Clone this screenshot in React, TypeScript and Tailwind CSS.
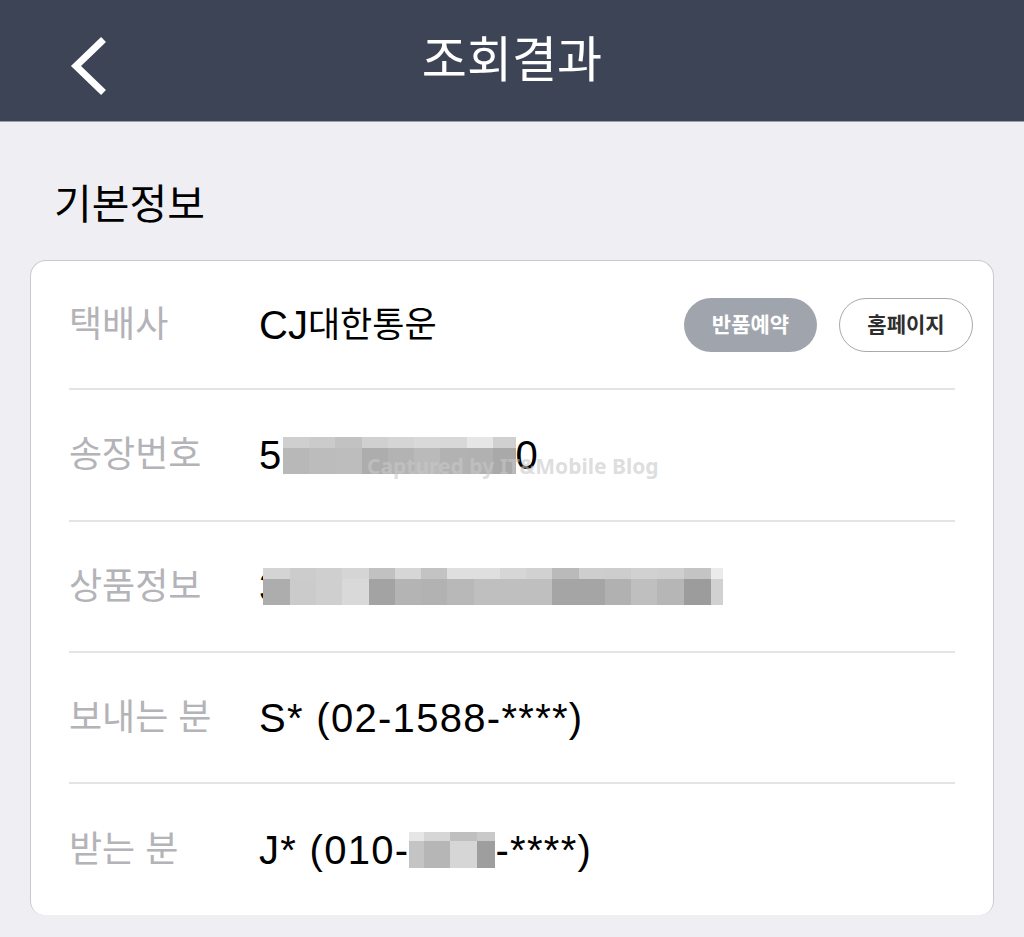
const font = { fontFamily: '"Liberation Sans", "Noto Sans CJK KR", sans-serif' }

type Block = { top: string[]; bottom: string[]; widths: number[] }

const serialBlock: Block = {
  widths: [26, 26, 27, 26, 26, 26, 27, 26, 23],
  top: ['#cfcfcf', '#cbcbcb', '#c2c2c2', '#d0d0d0', '#d5d5d5', '#d9d9d9', '#d8d8d8', '#e6e6e6', '#d0d0d0'],
  bottom: ['#b8b8b8', '#bcbcbc', '#bdbdbd', '#adadad', '#b3b3b3', '#bababa', '#b2b2b2', '#b1b1b1', '#a9a9a9'],
}

const productBlock: Block = {
  widths: [27, 26, 26, 27, 26, 26, 26, 27, 26, 26, 26, 27, 26, 26, 26, 27, 27, 12],
  top: ['#d4d4d4', '#cccccc', '#cfcfcf', '#d5d5d5', '#c1c1c1', '#d6d6d6', '#c3c3c3', '#dfdfdf', '#dfdfdf', '#d6d6d6', '#d1d1d1', '#bababa', '#cecece', '#cdcdcd', '#d1d1d1', '#cfcfcf', '#c4c4c4', '#ebebeb'],
  bottom: ['#adadad', '#cbcbcb', '#cfcfcf', '#d9d9d9', '#a3a3a3', '#b4b4b4', '#b2b2b2', '#b8b8b8', '#bfbfbf', '#bfbfbf', '#bfbfbf', '#a5a5a5', '#a5a5a5', '#b1b1b1', '#bfbfbf', '#b6b6b6', '#9c9c9c', '#d1d1d1'],
}

const phoneBlock: Block = {
  widths: [15, 26, 27, 18],
  top: ['#e6e6e6', '#d6d6d6', '#bfbfbf', '#c9c9c9'],
  bottom: ['#c4c4c4', '#b6b6b6', '#d6d6d6', '#9e9e9e'],
}

const Mosaic = ({ block, topH, bottomH }: { block: Block; topH: number; bottomH: number }) => (
  <span className="inline-flex flex-col self-center">
    <span className="flex">
      {block.widths.map((w, i) => (
        <span key={i} style={{ width: w, height: topH, background: block.top[i] }} />
      ))}
    </span>
    <span className="flex">
      {block.widths.map((w, i) => (
        <span key={i} style={{ width: w, height: bottomH, background: block.bottom[i] }} />
      ))}
    </span>
  </span>
)

const Row = ({ label, children, h }: { label: string; children: React.ReactNode; h: string }) => (
  <div className={`flex items-center px-[38px] ${h}`}>
    <div className="w-[190px] shrink-0 text-[36px] text-[#b3b3b8]">{label}</div>
    <div className="flex flex-1 items-center text-[40px] leading-none tracking-[1.3px] text-black">{children}</div>
  </div>
)

const Divider = () => <div className="mx-[38px] h-[2px] bg-[#e4e4e7]" />

export default function App() {
  return (
    <div className="min-h-[937px] w-[1024px] bg-[#efeef3]" style={font}>
      {/* header */}
      <div className="relative flex h-[122px] items-center justify-center border-b border-[#9a9ea8] bg-[#3d4456]">
        <button className="absolute left-[66px] top-[34px]" aria-label="back">
          <svg width="48" height="64" viewBox="0 0 48 64">
            <path d="M35 8 L10 32 L35 56" fill="none" stroke="white" strokeWidth="7" strokeLinecap="square" />
          </svg>
        </button>
        <h1 className="text-[49px] font-normal leading-none text-white">조회결과</h1>
      </div>

      {/* section title */}
      <div className="px-[54px] pt-[60px] text-[41px] leading-[46px] text-black">기본정보</div>

      {/* card */}
      <div className="mx-[30px] mt-[32px] h-[655px] rounded-t-[16px] rounded-b-[14px] border border-b-0 border-[#c9c9ce] bg-white">
        <div className="flex h-[127px] items-center pl-[38px] pr-[20px]">
          <div className="w-[190px] shrink-0 text-[36px] text-[#b3b3b8]">택배사</div>
          <div className="flex flex-1 items-center leading-none text-black">
            <span className="text-[40px]">CJ</span>
            <span className="text-[35px]">대한통운</span>
          </div>
          <div className="flex gap-[22px]">
            <button className="flex h-[54px] w-[133px] items-center justify-center rounded-full bg-[#a0a4ad] text-[21px] font-semibold text-white">
              반품예약
            </button>
            <button className="flex h-[54px] w-[134px] items-center justify-center rounded-full border border-[#a8a8ad] bg-white text-[21px] font-semibold text-[#2e2e2e]">
              홈페이지
            </button>
          </div>
        </div>
        <Divider />
        <Row label="송장번호" h="h-[130px] relative">
          <span>5</span>
          <Mosaic block={serialBlock} topH={11} bottomH={26} />
          <span>0</span>
          <span className="absolute left-[336px] top-[66px] text-[21px] font-bold tracking-normal text-[#c8c8c8]/60" style={{ fontFamily: '"Noto Sans", sans-serif' }}>
            Captured by IT&amp;Mobile Blog
          </span>
        </Row>
        <Divider />
        <Row label="상품정보" h="h-[129px]">
          <span className="inline-block w-[4px] overflow-hidden">3</span>
          <Mosaic block={productBlock} topH={11} bottomH={26} />
        </Row>
        <Divider />
        <Row label="보내는 분" h="h-[129px]">
          <span>S* (02-1588-****)</span>
        </Row>
        <Divider />
        <Row label="받는 분" h="h-[131px]">
          <span>J* (010-</span>
          <Mosaic block={phoneBlock} topH={9} bottomH={27} />
          <span>-****)</span>
        </Row>
      </div>
    </div>
  )
}
